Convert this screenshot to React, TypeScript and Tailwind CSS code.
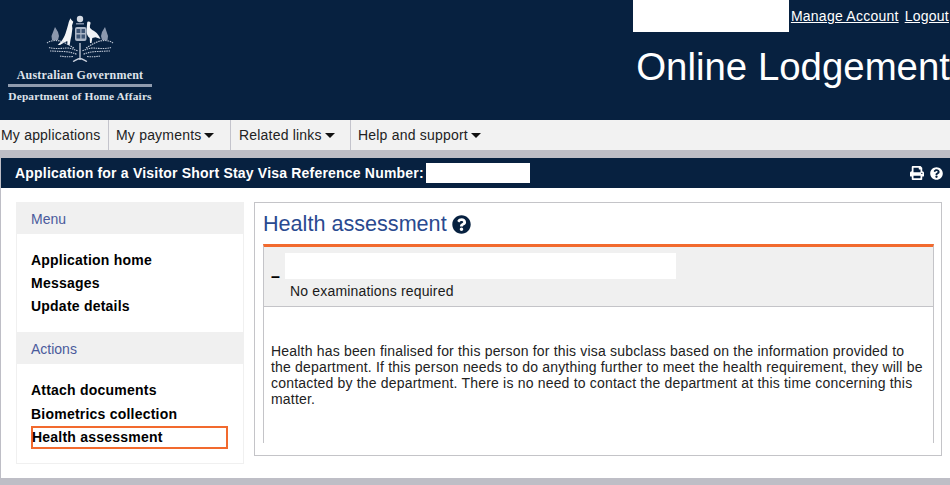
import React from "react";
import { FaPrint, FaQuestionCircle } from "react-icons/fa";

function Caret() {
  return <span className="ml-[3px] inline-block w-0 h-0 border-x-[5px] border-x-transparent border-t-[5px] border-t-[#111] align-middle" />;
}

function Arms() {
  return (
    <svg width="68" height="49" viewBox="0 0 68 49" fill="none">
      {/* crest */}
      <circle cx="34" cy="5" r="3.200" fill="#d5dbe4" />
      <rect x="30" y="9" width="8" height="1.500" fill="#7f8da5" />
      {/* kangaroo */}
      <path
        d="M24.500 4.500l1 1.500 1.800 1.800-.8 2.200-.5 1.500c.5 2 .5 4 0 6-.3 3-.8 6-1.500 8.500l-.8 5h-2.200l-.2-4-3 1.500-4.300 2.500h-2.300l4-4c1-2 2.800-4.500 3.800-7.500 1-3 2-6.500 2.800-9.500.5-2.500 1.400-4 2.200-6z"
        fill="#f5f6f8"
      />
      {/* emu */}
      <path
        d="M42.500 7.500c1.500 0 2.300.9 2 2-.5 1.500-.8 3-.4 4.500 1 1.500 3.200 2.500 5 3.800 2.300 1.600 3.800 3.800 5.400 7.200l-5-1.700-3.200.7-.8 5h-1.500l-.3-5c-2-1.500-3.200-4-3.200-7 .1-3 .5-5.500.7-8.500 0-.5.600-1 1.300-1z"
        fill="#f1f3f6"
      />
      {/* shield */}
      <rect x="29" y="13" width="11.500" height="14" rx="2" fill="#aab5c6" />
      <path d="M30.500 15h3.800v4h-3.800zM35.500 15h3.500v4h-3.500zM30.500 20.500h3.800v4h-3.800zM35.500 20.500h3.500v4h-3.500z" fill="#3d5474" />
      {/* foliage */}
      <g fill="#8b98ae">
        <path d="M9 13l3 5 1 4-1 4H6l-.5-4zM59 13l-3 5-1 4 1 4h5.500l.5-4z" />
      </g>
      <g stroke="#c0c8d5" strokeWidth="1.100" strokeDasharray="1.500 .8">
        <path d="M1 29c3-2.500 8-3 13-2 5 1.500 9 4 14 7" />
        <path d="M67 29c-3-2.500-8-3-13-2-5 1.500-9 4-14 7" />
        <path d="M3 33.500c5 1.500 12 1 18 .5 4 0 7 1.500 11 3" />
        <path d="M65 33.500c-5 1.500-12 1-18 .5-4 0-7 1.500-11 3" />
        <path d="M4 37c4 0 9 .5 14 .5 5 .5 9 1 13 3" />
        <path d="M64 37c-4 0-9 .5-14 .5-5 .5-9 1-13 3" />
        <path d="M14 42c4 .8 8 1 13 .5" />
        <path d="M54 42c-4 .8-8 1-13 .5" />
      </g>
      <path d="M34 29v17M27 47.500c3-1.500 5-3 7-3s4 1.500 7 3" stroke="#c9d0dc" strokeWidth="1.300" />
    </svg>
  );
}

function NavItem({ label, caret, className }: { label: string; caret?: boolean; className: string }) {
  return (
    <div className={`h-full flex items-center border-r border-[#c4c4cc] ${className}`}>
      <span>{label}</span>
      {caret && <Caret />}
    </div>
  );
}

function SideHead({ label }: { label: string }) {
  return <div className="h-8 pt-[2px] bg-[#f0f0f0] pl-[14px] flex items-center text-[14px] text-[#4a5a9c]">{label}</div>;
}

const linkClass = "flex items-center font-bold text-[14px] tracking-[0.22px] text-black";

export default function App() {
  return (
    <div className="w-[950px] h-[485px] overflow-hidden bg-white font-['Liberation_Sans',Arial,sans-serif]">
      <header className="h-[120px] bg-[#072140] flex justify-between">
        <div className="w-[160px] flex flex-col items-center pt-[14px] font-['Liberation_Serif',serif] font-bold text-[#dfe3ea]">
          <Arms />
          <div className="text-[12px] leading-[13px] mt-[6px] tracking-[0.2px]">Australian Government</div>
          <div className="h-[3px] w-[144px] bg-[#8f9bae] mt-[2px]" />
          <div className="text-[11.400px] leading-[13px] mt-[3px] tracking-[0.15px] whitespace-nowrap">Department of Home Affairs</div>
        </div>
        <div className="flex flex-col items-end">
          <div className="flex items-start pr-[1px] tracking-[0.25px]">
            <div className="w-[156px] h-8 bg-white mr-[2px]" />
            <a className="text-[14px] text-white underline leading-[16px] mt-[8px]">Manage Account</a>
            <a className="text-[14px] text-white underline leading-[16px] mt-[8px] ml-[6px]">Logout</a>
          </div>
          <div className="text-[38.400px] leading-[42px] text-white mt-[14px] whitespace-nowrap">Online Lodgement</div>
        </div>
      </header>

      <nav className="h-[30px] bg-[#f2f2f2] flex items-center text-[14px] tracking-[0.2px] text-[#222]">
        <NavItem label="My applications" className="w-[109px] pl-[1px]" />
        <NavItem label="My payments" caret className="w-[122px] pl-[7px]" />
        <NavItem label="Related links" caret className="w-[120px] pl-[8px]" />
        <div className="h-full flex items-center pl-[7px]">
          <span>Help and support</span>
          <Caret />
        </div>
      </nav>

      <div className="h-[8px] bg-[#bebec6]" />

      <div className="h-[320px] border-l border-[#bebec6]">
        <div className="h-[30px] bg-[#072140] text-white flex items-center pl-[14px] pr-[7px] font-bold text-[14px] tracking-[0.2px]">
          <span>Application for a Visitor Short Stay Visa Reference Number:</span>
          <div className="w-[104px] h-[20px] bg-white ml-[2px]" />
          <div className="ml-auto flex items-center gap-[6px]">
            <FaPrint className="w-[14px] h-[14px] text-white" />
            <FaQuestionCircle className="w-[13px] h-[13px] text-white" />
          </div>
        </div>

        <div className="flex items-start pt-[14px] pl-[15px]">
          <aside className="w-[228px] h-[262px] border-x border-b border-[#f0f0f0]">
            <SideHead label="Menu" />
            <div className="pl-[14px] pt-[15px] pb-[14px]">
              <div className={`${linkClass} h-[23px]`}>Application home</div>
              <div className={`${linkClass} h-[23px]`}>Messages</div>
              <div className={`${linkClass} h-[23px]`}>Update details</div>
            </div>
            <SideHead label="Actions" />
            <div className="pl-[14px] pt-[15px]">
              <div className={`${linkClass} h-[23px]`}>Attach documents</div>
              <div className={`${linkClass} h-[24px]`}>Biometrics collection</div>
              <div className={`${linkClass} h-[23px] w-[197px] border-2 border-[#f26a2e]`}>
                <span className="-ml-px">Health assessment</span>
              </div>
            </div>
          </aside>

          <main className="ml-[10px] w-[688px] h-[254px] border border-[#c4c4c8] px-[8px]">
            <div className="flex items-center h-[41px] gap-[5px] pt-[2px] text-[21.600px] text-[#2a4a90]">
              <span>Health assessment</span>
              <FaQuestionCircle className="w-[19px] h-[19px] text-[#072140]" />
            </div>
            <div className="w-[671px] h-[199px] border-x border-[#c4c4c8] border-t-[3px] border-t-[#f26a2e]">
              <div className="h-[60px] bg-[#f0f0f0] border-b border-[#c4c4c8] flex text-[14px] text-[#1a1a1a]">
                <div className="w-[21px] pl-[7px] pt-[18px] font-bold text-[16px] text-black">–</div>
                <div className="flex flex-col pt-[6px]">
                  <div className="w-[391px] h-[26px] bg-white" />
                  <div className="pl-[5px] leading-[16px] mt-[4px] tracking-[0.17px]">No examinations required</div>
                </div>
              </div>
              <p className="pl-[7px] pr-[10px] pt-[36px] text-[14px] leading-[16px] tracking-[0.19px] text-[#222]">
                Health has been finalised for this person for this visa subclass based on the information provided to the department. If this person needs to do anything further to meet the health requirement, they will be contacted by the department. There is no need to contact the department at this time concerning this matter.
              </p>
            </div>
          </main>
        </div>
      </div>

      <div className="h-[7px] bg-[#bebec6]" />
    </div>
  );
}
